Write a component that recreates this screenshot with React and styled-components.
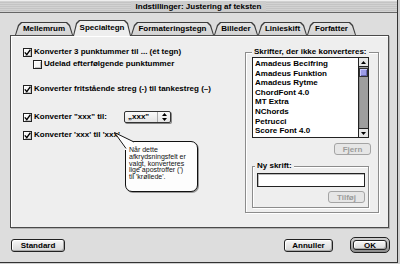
import React from "react";
import styled, { createGlobalStyle } from "styled-components";

const GlobalStyle = createGlobalStyle`
  html, body { margin: 0; padding: 0; background: #cfcfcf; }
  * { box-sizing: border-box; }
`;

const Window = styled.div`
  width: 398px;
  height: 263px;
  background: #dddddd;
  border-right: 1px solid #333;
  border-bottom: 1px solid #333;
  display: flex;
  flex-direction: column;
  font: bold 8px "Liberation Sans", Arial, sans-serif;
  color: #000;
`;

const TitleBar = styled.div`
  height: 13px;
  flex: none;
  border-bottom: 1px solid #666;
  border-top: 1px solid #eee;
  background: repeating-linear-gradient(to bottom, #d2d2d2 0 1px, #c4c4c4 1px 2px);
  display: flex;
  justify-content: center;
  align-items: center;
`;

const Title = styled.span`
  background: #cccccc;
  padding: 0 5px;
  line-height: 11px;
`;

const Body = styled.div`
  flex: 1;
  display: flex;
  flex-direction: column;
  padding: 7px 0 0 10px;
`;

const TabRow = styled.div`
  display: flex;
  align-items: flex-end;
  height: 15px;
  padding-left: 5px;
  position: relative;
  z-index: 2;
`;

const Tab = styled.div`
  position: relative;
  width: ${(p) => p.$w}px;
  height: ${(p) => (p.$active ? 16 : 13)}px;
  margin-bottom: ${(p) => (p.$active ? -1 : 0)}px;
  padding-bottom: ${(p) => (p.$active ? 2 : 0)}px;
  display: flex;
  align-items: center;
  justify-content: center;
  z-index: ${(p) => (p.$active ? 1 : 0)};
  &::before,
  &::after {
    content: "";
    position: absolute;
    clip-path: polygon(0 100%, 3px 3px, 6px 0, calc(100% - 6px) 0, calc(100% - 3px) 3px, 100% 100%);
  }
  &::before {
    inset: 0;
    background: #3c3c3c;
  }
  &::after {
    inset: 1px 1px 0 1px;
    background: ${(p) => (p.$active ? "#eeeeee" : "linear-gradient(#e4e4e4, #d2d2d2)")};
  }
  span {
    position: relative;
    z-index: 1;
  }
`;

const Panel = styled.div`
  width: 379px;
  height: 193px;
  flex: none;
  background: #eeeeee;
  border: 1px solid #4a4a4a;
  box-shadow: inset 1px 1px 0 #fff, 1px 1px 0 #b0b0b0;
  display: flex;
  padding-right: 9px;
`;

const LeftCol = styled.div`
  position: relative;
  flex: 1;
  display: flex;
  flex-direction: column;
  padding: 10px 0 0 12px;
`;

const Row = styled.div`
  display: flex;
  align-items: center;
  height: 12px;
  gap: 1px;
  margin-top: ${(p) => p.$mt || 0}px;
  margin-left: ${(p) => p.$indent || 0}px;
`;

const Box = styled.span`
  width: 9px;
  height: 9px;
  flex: none;
  border: 1px solid #222;
  background: #f7f7f7;
  box-shadow: inset 1px 1px 0 #fff, inset -1px -1px 0 #c4c4c4;
  margin-right: 1px;
  display: flex;
  svg { display: block; }
`;

const Label = styled.span`
  white-space: nowrap;
  line-height: 12px;
  ${(p) => (p.$w ? `width: ${p.$w}px; flex: none;` : "")}
`;

const Popup = styled.div`
  display: flex;
  width: 47px;
  height: 12px;
  flex: none;
  border: 1px solid #333;
  border-radius: 2px;
  background: linear-gradient(#fafafa, #e4e4e4);
  box-shadow: 1px 1px 0 #888;
`;

const PopupText = styled.span`
  flex: 1;
  padding-left: 3px;
  line-height: 10px;
`;

const PopupArrows = styled.span`
  width: 13px;
  border-left: 1px solid #aaa;
  display: flex;
  align-items: center;
  justify-content: center;
`;

const Balloon = styled.div`
  position: absolute;
  left: 114px;
  top: 105px;
  width: 73px;
  height: 51px;
  background: #fdfdfd;
  border: 1px solid #111;
  border-radius: 7px;
  box-shadow: 1px 1px 0 #999;
  padding: 5px 0 0 3px;
  font: 7px/6.8px "Liberation Sans", Arial, sans-serif;
  color: #111;
  svg {
    position: absolute;
    left: -13px;
    top: -11px;
  }
  p {
    margin: 0;
    position: relative;
    white-space: nowrap;
  }
`;

const Group = styled.div`
  width: 134px;
  align-self: flex-start;
  margin-top: 16px;
  border: 1px solid #8c8c8c;
  box-shadow: inset 1px 1px 0 #fff, 1px 1px 0 #fff;
  display: flex;
  flex-direction: column;
  padding: 0 9px 4px 6px;
`;

const GroupTitle = styled.span`
  align-self: flex-start;
  margin: -6px 0 0 ${(p) => p.$ml || 0}px;
  padding: 0 2px;
  height: 10px;
  line-height: 10px;
  background: #eeeeee;
`;

const List = styled.div`
  height: 81px;
  border: 1px solid #222;
  background: #fff;
  display: flex;
`;

const Items = styled.div`
  flex: 1;
  padding: 1px 0 0 2px;
`;

const Item = styled.div`
  height: 9.6px;
  line-height: 9.6px;
  white-space: nowrap;
`;

const Scroll = styled.div`
  width: 10px;
  border-left: 1px solid #222;
  display: flex;
  flex-direction: column;
`;

const Arrow = styled.div`
  height: 9px;
  flex: none;
  background: #e6e6e6;
  ${(p) => (p.$down ? "border-top: 1px solid #222;" : "border-bottom: 1px solid #222;")}
  display: flex;
  align-items: center;
  justify-content: center;
`;

const Track = styled.div`
  flex: 1;
  background: #9e9e9e;
  box-shadow: inset 1px 0 0 #888;
`;

const Thumb = styled.div`
  margin-top: 1px;
  height: 9px;
  background: #9c9ce6;
  border: 1px solid #333;
  box-shadow: inset 1px 1px 0 #c8c8ff, inset -1px -1px 0 #6666b0;
`;

const SmallButton = styled.div`
  align-self: flex-end;
  width: 37px;
  height: 12px;
  margin: ${(p) => p.$m};
  border: 1px solid #a4a4a4;
  border-radius: 3px;
  background: #e6e6e6;
  color: #9c9c9c;
  display: flex;
  align-items: center;
  justify-content: center;
`;

const SubGroup = styled.div`
  margin-top: 11px;
  border: 1px solid #8c8c8c;
  box-shadow: inset 1px 1px 0 #fff, 1px 1px 0 #fff;
  display: flex;
  flex-direction: column;
  padding: 0 3px 4px 4px;
`;

const TextField = styled.div`
  margin-top: 2px;
  height: 14px;
  border: 1px solid #222;
  background: #fff;
  box-shadow: inset 1px 1px 0 #bbb;
`;

const Footer = styled.div`
  display: flex;
  align-items: center;
  padding: 9px 7px 0 1px;
`;

const Button = styled.div`
  width: ${(p) => p.$w}px;
  height: 13px;
  margin-left: ${(p) => p.$ml || "0"};
  border: 1px solid #222;
  border-radius: 3px;
  background: linear-gradient(#f7f7f7, #d8d8d8);
  box-shadow: inset 1px 1px 0 #fff, inset -1px -1px 0 #a8a8a8;
  display: flex;
  align-items: center;
  justify-content: center;
`;

const DefaultRing = styled.div`
  width: 40px;
  height: 16px;
  margin-left: 17px;
  border: 1px solid #222;
  border-radius: 5px;
  padding: 2px;
  background: linear-gradient(#cfcfcf, #8c8c8c);
  display: flex;
  ${Button} {
    width: 100%;
    height: 100%;
  }
`;

const Check = ({ on }) => (
  <Box>
    {on && (
      <svg width="7" height="7" viewBox="0 0 7 7">
        <path d="M0.8 3.4 L2.8 5.6 L6.4 0.6" fill="none" stroke="#000" strokeWidth="1.4" />
      </svg>
    )}
  </Box>
);

const tabs = [
  ["Mellemrum", 58],
  ["Specialtegn", 58, true],
  ["Formateringstegn", 83],
  ["Billeder", 44],
  ["Linieskift", 49],
  ["Forfatter", 49],
];

const fonts = [
  "Amadeus Becifring",
  "Amadeus Funktion",
  "Amadeus Rytme",
  "ChordFont 4.0",
  "MT Extra",
  "NChords",
  "Petrucci",
  "Score Font 4.0",
];

export default function App() {
  return (
    <>
      <GlobalStyle />
      <Window>
        <TitleBar>
          <Title>Indstillinger: Justering af teksten</Title>
        </TitleBar>
        <Body>
          <TabRow>
            {tabs.map(([name, w, active]) => (
              <Tab key={name} $w={w} $active={active}>
                <span>{name}</span>
              </Tab>
            ))}
          </TabRow>
          <Panel>
            <LeftCol>
              <Row>
                <Check on />
                <Label>Konverter 3 punktummer til ... (ét tegn)</Label>
              </Row>
              <Row $indent={10}>
                <Check />
                <Label>Udelad efterfølgende punktummer</Label>
              </Row>
              <Row $mt={13}>
                <Check on />
                <Label>Konverter fritstående streg (-) til tankestreg (–)</Label>
              </Row>
              <Row $mt={16}>
                <Check on />
                <Label $w={89}>Konverter "xxx" til:</Label>
                <Popup>
                  <PopupText>„xxx"</PopupText>
                  <PopupArrows>
                    <svg width="5" height="8" viewBox="0 0 5 8">
                      <path d="M2.5 0 L5 3 L0 3 Z M0 5 L5 5 L2.5 8 Z" fill="#000" />
                    </svg>
                  </PopupArrows>
                </Popup>
              </Row>
              <Row $mt={6}>
                <Check on />
                <Label>Konverter 'xxx' til 'xxx'</Label>
              </Row>
              <Balloon>
                <svg width="24" height="20" viewBox="0 0 24 20">
                  <polygon points="1.5,1.5 21,11 21,19 12,19 12,18" fill="#fdfdfd" />
                  <path d="M21 11 L1.5 1.5 L13 17.5" fill="none" stroke="#111" strokeWidth="1" />
                </svg>
                <p>
                  Når dette
                  <br />
                  afkrydsningsfelt er
                  <br />
                  valgt, konverteres
                  <br />
                  lige apostroffer (')
                  <br />
                  til 'krøllede'.
                </p>
              </Balloon>
            </LeftCol>
            <Group>
              <GroupTitle>Skrifter, der ikke konverteres:</GroupTitle>
              <List>
                <Items>
                  {fonts.map((f) => (
                    <Item key={f}>{f}</Item>
                  ))}
                </Items>
                <Scroll>
                  <Arrow>
                    <svg width="5" height="3" viewBox="0 0 5 3">
                      <path d="M2.5 0 L5 3 L0 3 Z" fill="#000" />
                    </svg>
                  </Arrow>
                  <Track>
                    <Thumb />
                  </Track>
                  <Arrow $down>
                    <svg width="5" height="3" viewBox="0 0 5 3">
                      <path d="M0 0 L5 0 L2.5 3 Z" fill="#000" />
                    </svg>
                  </Arrow>
                </Scroll>
              </List>
              <SmallButton $m="5px -2px 0 0">Fjern</SmallButton>
              <SubGroup>
                <GroupTitle $ml={-2}>Ny skrift:</GroupTitle>
                <TextField />
                <SmallButton $m="4px 0 0 0">Tilføj</SmallButton>
              </SubGroup>
            </Group>
          </Panel>
          <Footer>
            <Button $w={54} $ml="0">Standard</Button>
            <Button $w={49} $ml="auto">Annuller</Button>
            <DefaultRing>
              <Button>OK</Button>
            </DefaultRing>
          </Footer>
        </Body>
      </Window>
    </>
  );
}
